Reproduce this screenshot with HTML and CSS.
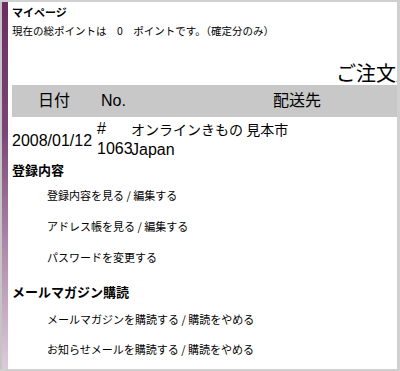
FILE: index.html
```html
<!DOCTYPE html>
<html lang="ja">
<head>
<meta charset="utf-8">
<title>マイページ</title>
<link rel="stylesheet" href="styles.css">
</head>
<body>
<div class="frame">
  <div class="stripe"></div>
  <div class="content">
    <div class="page-title">マイページ</div>
    <div class="points">現在の総ポイントは　0　ポイントです。（確定分のみ）</div>

    <div class="orders">
      <div class="orders-title">ご注文履歴</div>
      <table class="order-table">
        <colgroup>
          <col class="c-date">
          <col class="c-no">
          <col class="c-ship">
          <col class="c-rest">
        </colgroup>
        <thead>
          <tr>
            <th>日付</th>
            <th>No.</th>
            <th>配送先</th>
            <th></th>
          </tr>
        </thead>
        <tbody>
          <tr>
            <td class="d-date">2008/01/12</td>
            <td class="d-no"># 1063</td>
            <td class="d-ship"><span class="ja">オンラインきもの 見本市</span><br>Japan</td>
            <td></td>
          </tr>
        </tbody>
      </table>
    </div>

    <h2 class="sec-title">登録内容</h2>
    <div class="links first">
      <a>登録内容を見る / 編集する</a>
      <a>アドレス帳を見る / 編集する</a>
      <a>パスワードを変更する</a>
    </div>

    <h2 class="sec-title mag">メールマガジン購読</h2>
    <div class="links second">
      <a>メールマガジンを購読する / 購読をやめる</a>
      <a>お知らせメールを購読する / 購読をやめる</a>
    </div>
  </div>
</div>
</body>
</html>
```

FILE: styles.css
```css
html, body {
  margin: 0;
  padding: 0;
  background: #ffffff;
}

.frame {
  box-sizing: border-box;
  width: 400px;
  height: 371px;
  border-top: 2px solid #d0d0d0;
  border-right: 3px solid #d0d0d0;
  border-bottom: 2px solid #d0d0d0;
  display: flex;
  overflow: hidden;
  font-family: "Liberation Sans", "Noto Sans CJK JP", sans-serif;
  color: #000;
}

.stripe {
  flex: 0 0 6px;
  border-left: 2px solid #c4c4c4;
  background: linear-gradient(to bottom, #6a2f60 0%, #7a4576 35%, #b48fb0 70%, #dccbd9 100%);
}

.content {
  flex: 1;
  min-width: 0;
  padding: 2px 0 0 4px;
  overflow: hidden;
}

.page-title {
  font-family: "Noto Sans CJK JP", sans-serif;
  font-size: 11px;
  font-weight: bold;
  line-height: 16px;
}

.points {
  font-family: "Noto Sans CJK JP", sans-serif;
  font-size: 10.5px;
  line-height: 16px;
  margin-top: 3px;
  white-space: nowrap;
}

.orders {
  margin-top: 22px;
}

.orders-title {
  font-family: "Noto Sans CJK JP", sans-serif;
  font-size: 20px;
  line-height: 24px;
  padding-left: 324px;
  white-space: nowrap;
}

.order-table {
  border-collapse: collapse;
  table-layout: fixed;
  width: 700px;
  font-size: 16px;
}

.c-date { width: 84px; }
.c-no { width: 35px; }
.c-ship { width: 332px; }
.c-rest { width: 249px; }

.order-table th {
  background: #c8c8c8;
  height: 32px;
  padding: 0;
  font-weight: normal;
  text-align: center;
  vertical-align: middle;
  line-height: 20px;
}

.order-table td {
  padding: 2px 0 0 0;
  line-height: 20px;
  vertical-align: top;
  text-align: left;
}

.order-table td.d-date {
  vertical-align: middle;
  padding-top: 4px;
}

.d-no {
  padding-left: 1px !important;
  overflow: visible;
}

.ja {
  font-family: "Noto Sans CJK JP", sans-serif;
  font-size: 14px;
}

.sec-title {
  margin: 0;
  font-family: "Noto Sans CJK JP", sans-serif;
  font-size: 13px;
  font-weight: bold;
  line-height: 20px;
}

.sec-title.mag {
  margin-top: 17px;
}

.links {
  display: flex;
  flex-direction: column;
  gap: 15px;
  padding-left: 35px;
}

.links.first { padding-top: 7px; }
.links.second { padding-top: 9px; gap: 14px; }

.links a {
  font-family: "Noto Sans CJK JP", sans-serif;
  font-size: 11px;
  line-height: 16px;
  color: #000;
  text-decoration: none;
  white-space: nowrap;
}
```
